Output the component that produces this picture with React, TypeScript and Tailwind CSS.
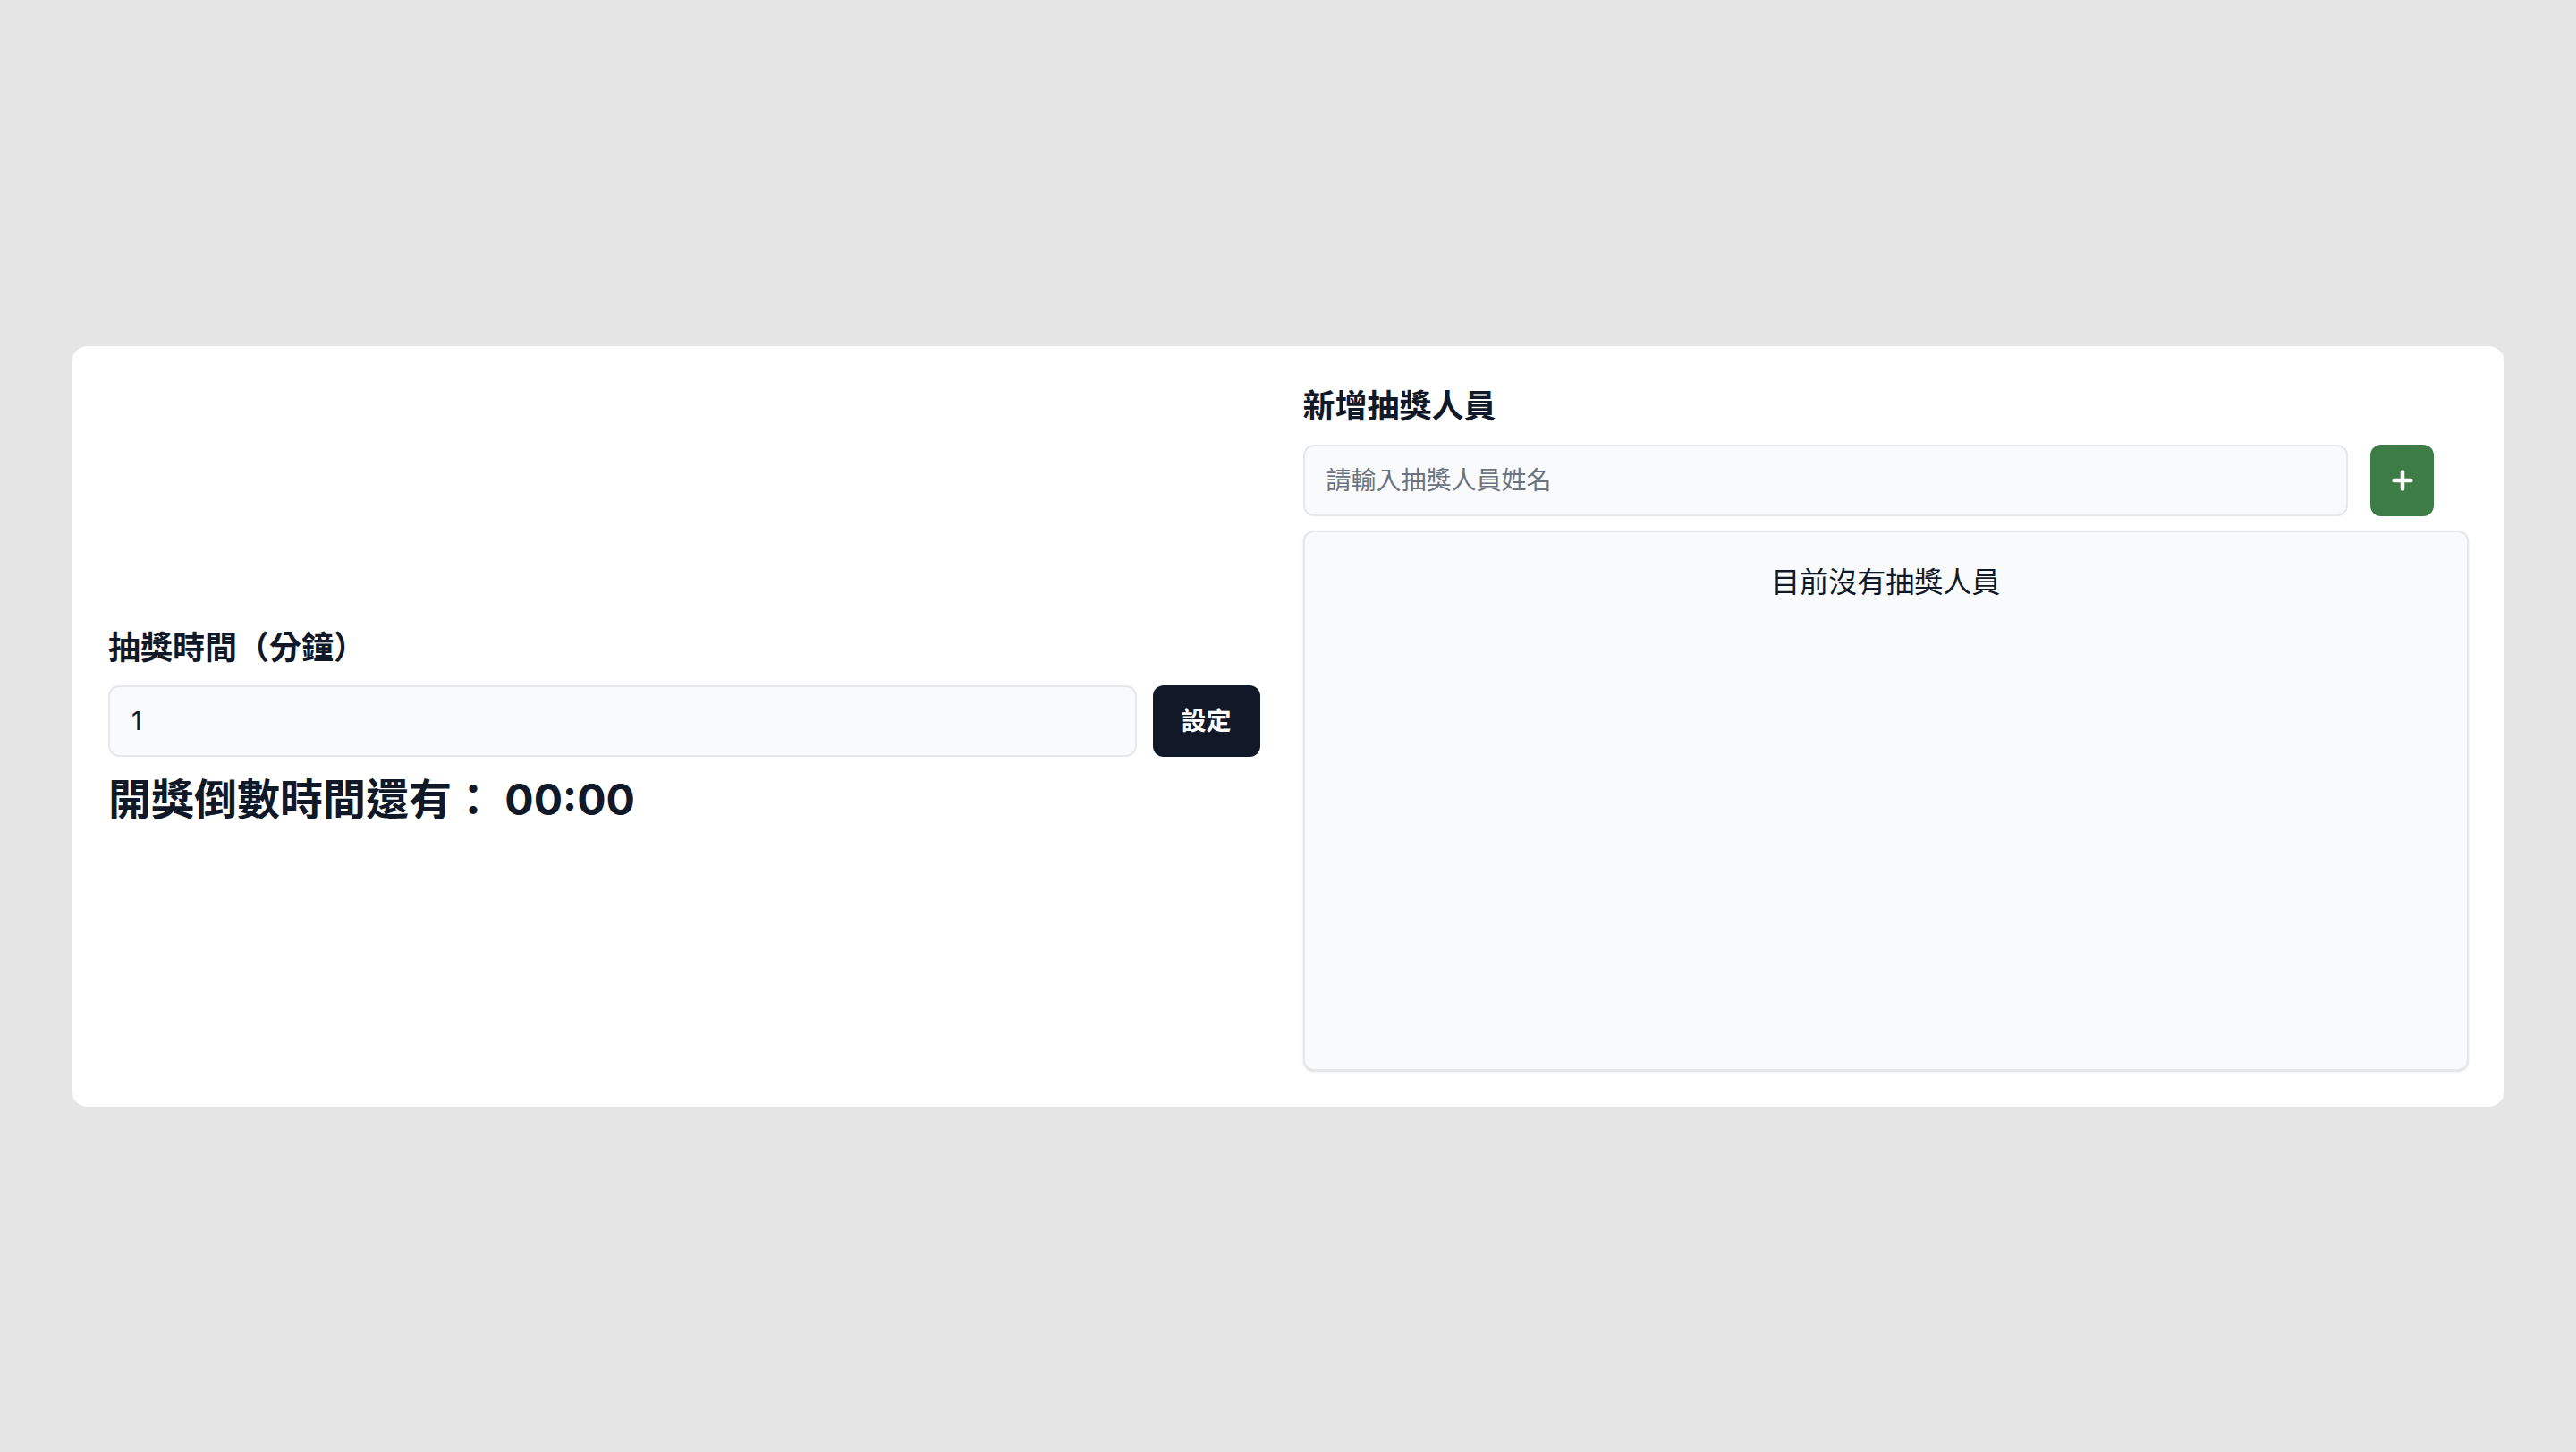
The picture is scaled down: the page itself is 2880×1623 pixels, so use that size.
import React from "react";

const PlusIcon = () => (
  <svg
    viewBox="0 0 24 24"
    className="w-[24px] h-[24px]"
    fill="none"
    stroke="currentColor"
    strokeWidth={4.5}
    strokeLinecap="round"
  >
    <path d="M12 2.5v19M2.5 12h19" />
  </svg>
);

const App = () => {
  const [minutes, setMinutes] = React.useState("1");
  const [name, setName] = React.useState("");

  return (
    <div className="min-h-screen bg-[#e5e5e5] flex items-center px-[80px] font-['Inter','Noto_Sans_CJK_TC',sans-serif] text-[#111827]">
      <div className="w-full bg-white rounded-[18px] pl-[41px] pr-[40px] py-[40px] grid grid-cols-2 gap-[32px] items-center">
        {/* left: timer settings */}
        <div className="pr-[16px]">
          <h2 className="text-[36px] leading-[52px] font-bold mb-[16px]">
            抽獎時間（分鐘）
          </h2>
          <div className="flex gap-[18px]">
            <input
              type="number"
              value={minutes}
              onChange={(e) => setMinutes(e.target.value)}
              className="flex-1 h-[80px] px-[24px] bg-[#f9fafb] border-2 border-[#e5e7eb] rounded-[12px] text-[28px] outline-none"
            />
            <button className="w-[120px] h-[80px] bg-[#111827] text-white rounded-[12px] text-[28px] font-bold">
              設定
            </button>
          </div>
          <p className="mt-[16px] text-[48px] leading-[64px] font-bold">
            開獎倒數時間還有： 00:00
          </p>
        </div>

        {/* right: participants */}
        <div>
          <h2 className="text-[36px] leading-[54px] font-bold mb-[16px]">
            新增抽獎人員
          </h2>
          <div className="flex gap-[25px] pr-[39px] mb-[16px]">
            <input
              type="text"
              value={name}
              onChange={(e) => setName(e.target.value)}
              placeholder="請輸入抽獎人員姓名"
              className="flex-1 h-[80px] px-[24px] bg-[#f9fafb] border-2 border-[#e5e7eb] rounded-[12px] text-[28px] outline-none placeholder:text-[#6b7280]"
            />
            <button className="w-[71px] h-[80px] bg-[#3d7d45] text-white rounded-[12px] flex items-center justify-center">
              <PlusIcon />
            </button>
          </div>
          <div className="h-[604px] bg-[#f9fafb] border-2 border-[#e5e7eb] rounded-[12px] shadow-sm pt-[32px] text-center text-[32px] leading-[48px]">
            目前沒有抽獎人員
          </div>
        </div>
      </div>
    </div>
  );
};

export default App;
